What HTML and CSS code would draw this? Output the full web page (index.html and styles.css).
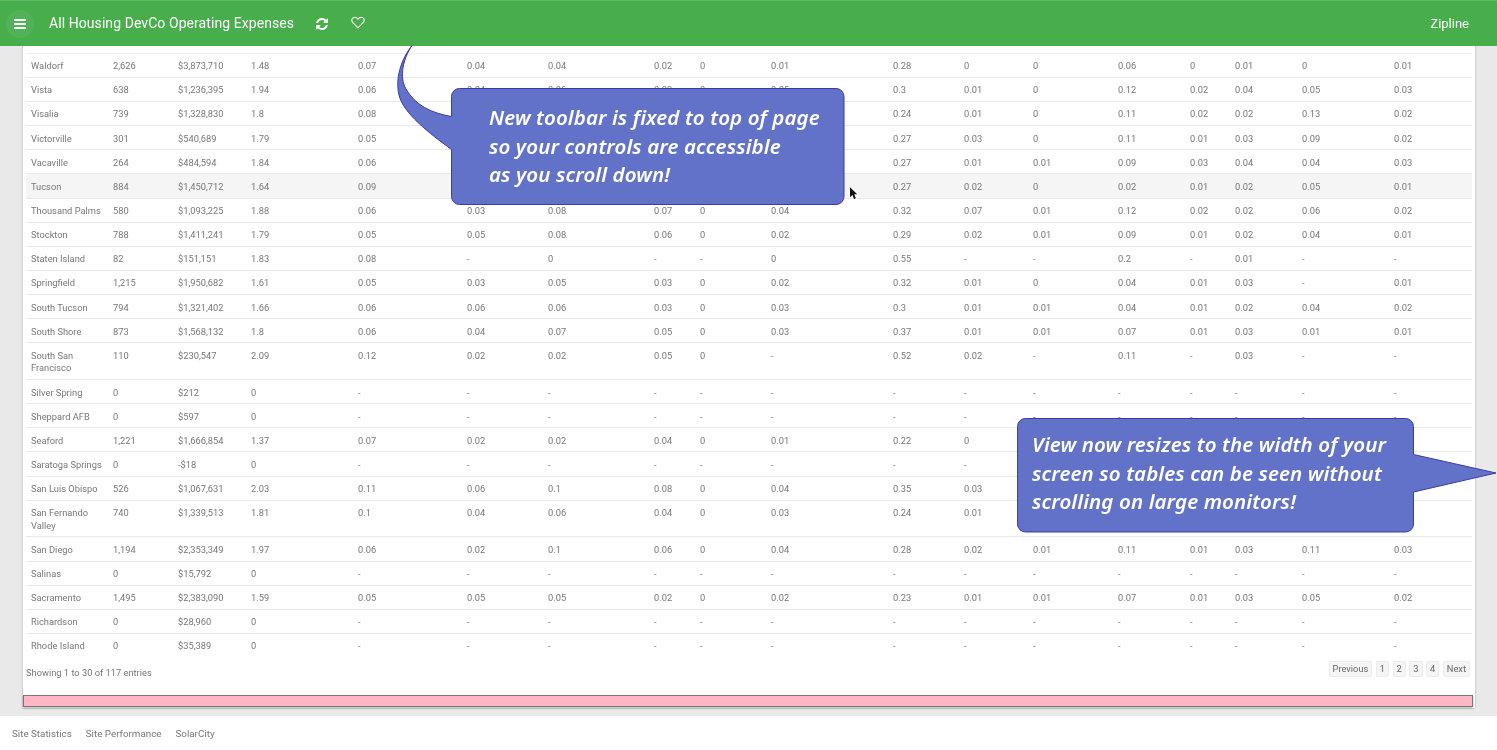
FILE: index.html
```html
<!DOCTYPE html>
<html lang="en">
<head>
<meta charset="utf-8">
<title>All Housing DevCo Operating Expenses</title>
<link rel="stylesheet" href="styles.css">
</head>
<body>
<header class="toolbar">
  <button class="menu" aria-label="Menu">
    <svg viewBox="0 0 12 10" width="12" height="10"><path d="M0 0h12v2H0zM0 4h12v2H0zM0 8h12v2H0z" fill="#fff"/></svg>
  </button>
  <h1 class="title">All Housing DevCo Operating Expenses</h1>
  <svg class="icon-refresh" viewBox="0 0 1536 1536" width="12" height="12"><path fill="#fff" d="M1511 928q0 5-1 7-64 268-268 434.500t-478 166.500q-146 0-282.500-55t-243.500-157l-129 129q-19 19-45 19t-45-19-19-45v-448q0-26 19-45t45-19h448q26 0 45 19t19 45-19 45l-137 137q71 66 161 102t187 36q134 0 250-65t186-179q11-17 53-117 8-23 30-23h192q13 0 22.500 9.500t9.500 22.500zm25-800v448q0 26-19 45t-45 19h-448q-26 0-45-19t-19-45 19-45l138-138q-148-137-349-137-134 0-250 65t-186 179q-11 17-53 117-8 23-30 23h-199q-13 0-22.500-9.500t-9.500-22.500v-7q65-268 270-434.500t480-166.500q146 0 284 55.500t245 156.500l130-129q19-19 45-19t45 19 19 45z"/></svg>
  <svg class="icon-heart" viewBox="0 0 14 13" width="14" height="13"><path fill="none" stroke="#fff" stroke-width="1.1" d="M7 11.800 1.900 6.700C.3 5.100.6 2.900 2 1.900c1.500-1 3.600-.6 5 1.300 1.400-1.900 3.500-2.300 5-1.300 1.400 1 1.700 3.200.1 4.800z"/></svg>
  <span class="brand">Zipline</span>
</header>

<main class="content">
  <section class="panel">
    <table class="data">
      <tbody>
        <tr><td>Waldorf</td><td>2,626</td><td>$3,873,710</td><td>1.48</td><td>0.07</td><td>0.04</td><td>0.04</td><td>0.02</td><td>0</td><td>0.01</td><td>0.28</td><td>0</td><td>0</td><td>0.06</td><td>0</td><td>0.01</td><td>0</td><td>0.01</td></tr>
        <tr><td>Vista</td><td>638</td><td>$1,236,395</td><td>1.94</td><td>0.06</td><td>0.04</td><td>0.06</td><td>0.03</td><td>0</td><td>0.05</td><td>0.3</td><td>0.01</td><td>0</td><td>0.12</td><td>0.02</td><td>0.04</td><td>0.05</td><td>0.03</td></tr>
        <tr><td>Visalia</td><td>739</td><td>$1,328,830</td><td>1.8</td><td>0.08</td><td>0.03</td><td>0.05</td><td>0.04</td><td>0</td><td>0.02</td><td>0.24</td><td>0.01</td><td>0</td><td>0.11</td><td>0.02</td><td>0.02</td><td>0.13</td><td>0.02</td></tr>
        <tr><td>Victorville</td><td>301</td><td>$540,689</td><td>1.79</td><td>0.05</td><td>0.03</td><td>0.06</td><td>0.05</td><td>0</td><td>0.03</td><td>0.27</td><td>0.03</td><td>0</td><td>0.11</td><td>0.01</td><td>0.03</td><td>0.09</td><td>0.02</td></tr>
        <tr><td>Vacaville</td><td>264</td><td>$484,594</td><td>1.84</td><td>0.06</td><td>0.04</td><td>0.07</td><td>0.04</td><td>0</td><td>0.03</td><td>0.27</td><td>0.01</td><td>0.01</td><td>0.09</td><td>0.03</td><td>0.04</td><td>0.04</td><td>0.03</td></tr>
        <tr class="hover"><td>Tucson</td><td>884</td><td>$1,450,712</td><td>1.64</td><td>0.09</td><td>0.04</td><td>0.05</td><td>0.03</td><td>0</td><td>0.02</td><td>0.27</td><td>0.02</td><td>0</td><td>0.02</td><td>0.01</td><td>0.02</td><td>0.05</td><td>0.01</td></tr>
        <tr><td>Thousand Palms</td><td>580</td><td>$1,093,225</td><td>1.88</td><td>0.06</td><td>0.03</td><td>0.08</td><td>0.07</td><td>0</td><td>0.04</td><td>0.32</td><td>0.07</td><td>0.01</td><td>0.12</td><td>0.02</td><td>0.02</td><td>0.06</td><td>0.02</td></tr>
        <tr><td>Stockton</td><td>788</td><td>$1,411,241</td><td>1.79</td><td>0.05</td><td>0.05</td><td>0.08</td><td>0.06</td><td>0</td><td>0.02</td><td>0.29</td><td>0.02</td><td>0.01</td><td>0.09</td><td>0.01</td><td>0.02</td><td>0.04</td><td>0.01</td></tr>
        <tr><td>Staten Island</td><td>82</td><td>$151,151</td><td>1.83</td><td>0.08</td><td>-</td><td>0</td><td>-</td><td>-</td><td>0</td><td>0.55</td><td>-</td><td>-</td><td>0.2</td><td>-</td><td>0.01</td><td>-</td><td>-</td></tr>
        <tr><td>Springfield</td><td>1,215</td><td>$1,950,682</td><td>1.61</td><td>0.05</td><td>0.03</td><td>0.05</td><td>0.03</td><td>0</td><td>0.02</td><td>0.32</td><td>0.01</td><td>0</td><td>0.04</td><td>0.01</td><td>0.03</td><td>-</td><td>0.01</td></tr>
        <tr><td>South Tucson</td><td>794</td><td>$1,321,402</td><td>1.66</td><td>0.06</td><td>0.06</td><td>0.06</td><td>0.03</td><td>0</td><td>0.03</td><td>0.3</td><td>0.01</td><td>0.01</td><td>0.04</td><td>0.01</td><td>0.02</td><td>0.04</td><td>0.02</td></tr>
        <tr><td>South Shore</td><td>873</td><td>$1,568,132</td><td>1.8</td><td>0.06</td><td>0.04</td><td>0.07</td><td>0.05</td><td>0</td><td>0.03</td><td>0.37</td><td>0.01</td><td>0.01</td><td>0.07</td><td>0.01</td><td>0.03</td><td>0.01</td><td>0.01</td></tr>
        <tr><td>South San Francisco</td><td>110</td><td>$230,547</td><td>2.09</td><td>0.12</td><td>0.02</td><td>0.02</td><td>0.05</td><td>0</td><td>-</td><td>0.52</td><td>0.02</td><td>-</td><td>0.11</td><td>-</td><td>0.03</td><td>-</td><td>-</td></tr>
        <tr><td>Silver Spring</td><td>0</td><td>$212</td><td>0</td><td>-</td><td>-</td><td>-</td><td>-</td><td>-</td><td>-</td><td>-</td><td>-</td><td>-</td><td>-</td><td>-</td><td>-</td><td>-</td><td>-</td></tr>
        <tr><td>Sheppard AFB</td><td>0</td><td>$597</td><td>0</td><td>-</td><td>-</td><td>-</td><td>-</td><td>-</td><td>-</td><td>-</td><td>-</td><td>-</td><td>-</td><td>-</td><td>-</td><td>-</td><td>-</td></tr>
        <tr><td>Seaford</td><td>1,221</td><td>$1,666,854</td><td>1.37</td><td>0.07</td><td>0.02</td><td>0.02</td><td>0.04</td><td>0</td><td>0.01</td><td>0.22</td><td>0</td><td>0</td><td>0.05</td><td>0.01</td><td>0.02</td><td>0.03</td><td>0.01</td></tr>
        <tr><td>Saratoga Springs</td><td>0</td><td>-$18</td><td>0</td><td>-</td><td>-</td><td>-</td><td>-</td><td>-</td><td>-</td><td>-</td><td>-</td><td>-</td><td>-</td><td>-</td><td>-</td><td>-</td><td>-</td></tr>
        <tr><td>San Luis Obispo</td><td>526</td><td>$1,067,631</td><td>2.03</td><td>0.11</td><td>0.06</td><td>0.1</td><td>0.08</td><td>0</td><td>0.04</td><td>0.35</td><td>0.03</td><td>0.01</td><td>0.1</td><td>0.01</td><td>0.03</td><td>0.06</td><td>0.02</td></tr>
        <tr><td>San Fernando Valley</td><td>740</td><td>$1,339,513</td><td>1.81</td><td>0.1</td><td>0.04</td><td>0.06</td><td>0.04</td><td>0</td><td>0.03</td><td>0.24</td><td>0.01</td><td>0.01</td><td>0.09</td><td>0.01</td><td>0.02</td><td>0.05</td><td>0.02</td></tr>
        <tr><td>San Diego</td><td>1,194</td><td>$2,353,349</td><td>1.97</td><td>0.06</td><td>0.02</td><td>0.1</td><td>0.06</td><td>0</td><td>0.04</td><td>0.28</td><td>0.02</td><td>0.01</td><td>0.11</td><td>0.01</td><td>0.03</td><td>0.11</td><td>0.03</td></tr>
        <tr><td>Salinas</td><td>0</td><td>$15,792</td><td>0</td><td>-</td><td>-</td><td>-</td><td>-</td><td>-</td><td>-</td><td>-</td><td>-</td><td>-</td><td>-</td><td>-</td><td>-</td><td>-</td><td>-</td></tr>
        <tr><td>Sacramento</td><td>1,495</td><td>$2,383,090</td><td>1.59</td><td>0.05</td><td>0.05</td><td>0.05</td><td>0.02</td><td>0</td><td>0.02</td><td>0.23</td><td>0.01</td><td>0.01</td><td>0.07</td><td>0.01</td><td>0.03</td><td>0.05</td><td>0.02</td></tr>
        <tr><td>Richardson</td><td>0</td><td>$28,960</td><td>0</td><td>-</td><td>-</td><td>-</td><td>-</td><td>-</td><td>-</td><td>-</td><td>-</td><td>-</td><td>-</td><td>-</td><td>-</td><td>-</td><td>-</td></tr>
        <tr><td>Rhode Island</td><td>0</td><td>$35,389</td><td>0</td><td>-</td><td>-</td><td>-</td><td>-</td><td>-</td><td>-</td><td>-</td><td>-</td><td>-</td><td>-</td><td>-</td><td>-</td><td>-</td><td>-</td></tr>
      </tbody>
    </table>
    <div class="table-foot">
      <div class="info">Showing 1 to 30 of 117 entries</div>
      <nav class="pager">
        <a class="page">Previous</a>
        <a class="page">1</a>
        <a class="page">2</a>
        <a class="page">3</a>
        <a class="page">4</a>
        <a class="page">Next</a>
      </nav>
    </div>
    <div class="pink-bar"></div>
  </section>
</main>

<footer class="footer">
  <a>Site Statistics</a>
  <a>Site Performance</a>
  <a>SolarCity</a>
</footer>

<aside class="callout callout-top">
  <svg class="bubble" viewBox="0 0 460 170" width="460" height="170">
    <path class="bubble-shape" d="M70.500 43.500H447a8 8 0 0 1 8 8v100a8 8 0 0 1-8 8H70.500a8 8 0 0 1-8-8v-47C40 88 14 68 10 50 6 34 12 14 23 .5 14 14 10 32 17 44c9 16 25 24 45.500 27.500V51.500a8 8 0 0 1 8-8z"/>
  </svg>
  <p class="callout-text callout-text-top">New toolbar is fixed to top of page<br>so your controls are accessible<br>as you scroll down!</p>
</aside>

<aside class="callout callout-side">
  <svg class="bubble" viewBox="0 0 482 116" width="482" height="116">
    <path class="bubble-shape" d="M9.500 1.500h380a8 8 0 0 1 8 8v28L480 56l-82.500 19v32a8 8 0 0 1-8 8h-380a8 8 0 0 1-8-8V9.500a8 8 0 0 1 8-8z"/>
  </svg>
  <p class="callout-text callout-text-side">View now resizes to the width of your<br>screen so tables can be seen without<br>scrolling on large monitors!</p>
</aside>

<svg class="cursor" viewBox="0 0 10 15" width="9" height="14"><path d="M0 0v11l2.700-2.500L4.500 13l2-.8L4.700 7.800H8z" fill="#111"/></svg>
</body>
</html>
```
FILE: styles.css
```css
* { box-sizing: border-box; }
html, body { margin: 0; padding: 0; height: 100%; overflow: hidden; background: #fff; }
body {
  position: relative;
  width: 1497px;
  height: 750px;
  display: flex;
  flex-direction: column;
  font-family: Roboto, "Liberation Sans", sans-serif;
  color: #777;
  filter: blur(.4px);
}

.toolbar {
  position: relative;
  z-index: 2;
  flex: 0 0 46px;
  display: flex;
  align-items: center;
  padding: 0 28px 0 6px;
  background: #47ae4b;
  border-top: 1px solid #62ba66;
  color: #fff;
}
.menu {
  flex: none;
  width: 28px;
  height: 28px;
  display: flex;
  align-items: center;
  justify-content: center;
  padding: 0;
  border: 0;
  border-radius: 50%;
  background: #53b257;
}
.title {
  margin: 0 0 1.500px 15px;
  font-size: 14px;
  font-weight: 400;
  letter-spacing: .07px;
  line-height: 1;
  white-space: nowrap;
}
.icon-refresh { flex: none; margin-left: 22px; }
.icon-heart { flex: none; margin-left: 23px; margin-top: -2px; }
.brand { margin-left: auto; font-size: 13px; margin-bottom: 1px; }

.content {
  flex: 1 1 auto;
  min-height: 0;
  padding: 0 22px 8px 23px;
  background: #e9e9e9;
}
.panel {
  height: 100%;
  padding: 6.700px 3px 0;
  background: #fff;
  box-shadow: 0 0 2px rgba(0,0,0,.3);
}

.data { display: block; width: 1446px; border-collapse: collapse; border-top: 1.500px solid #eee; }
.data tbody { display: block; }
.data tr {
  display: grid;
  grid-template-columns: 82px 65px 73px 107px 109px 81px 106px 46px 71px 122px 71px 69px 85px 72px 45px 67px 92px 83px;
  border-bottom: 1px solid #e9e9e9;
}
.data tr:last-child { border-bottom: 0; }
.data tr.hover { background: #f5f5f5; }
.data td {
  display: block;
  padding: 6.500px 5px 4.150px;
  font-size: 9.300px;
  line-height: 12.500px;
  color: #777;
}

.table-foot { display: flex; justify-content: space-between; align-items: flex-start; padding-right: 2px; }
.info { padding-top: 10px; font-size: 9.300px; line-height: 12px; height: 22px; }
.pager { display: flex; gap: 3.500px; padding-top: 4px; }
.page {
  display: block;
  height: 16px;
  padding: 0 3px;
  border: 1px solid #ececec;
  border-radius: 2px;
  background: #f5f5f5;
  font-size: 9.300px;
  line-height: 14px;
  color: #666;
}
.pink-bar {
  height: 12px;
  margin: 16px -1px 0 -3px;
  background: #ffb6c6;
  border: 1px solid #777;
  box-shadow: 0 1px 2px rgba(0,0,0,.3);
}

.footer {
  flex: 0 0 34px;
  display: flex;
  gap: 14px;
  align-items: center;
  padding-left: 12px;
  font-size: 9.800px;
  color: #777;
}

.callout { position: absolute; z-index: 3; }
.callout-top { left: 389px; top: 45px; width: 460px; height: 170px; }
.callout-side { left: 1016px; top: 417px; width: 482px; height: 116px; }
.bubble { position: absolute; left: 0; top: 0; display: block; }
.bubble-shape { fill: #6272c9; stroke: #3b3ba6; stroke-width: 1; }
.callout-text {
  position: relative;
  margin: 0;
  color: #fff;
  font-family: "Noto Sans", "DejaVu Sans", sans-serif;
  font-style: italic;
  font-weight: 600;
  font-size: 20.500px;
  letter-spacing: .1px;
  line-height: 28.500px;
  white-space: nowrap;
}
.callout-text-top { padding: 58px 0 0 100px; }
.callout-text-side { padding: 13px 0 0 16px; }
.cursor { position: absolute; z-index: 3; left: 850px; top: 187px; }
```
